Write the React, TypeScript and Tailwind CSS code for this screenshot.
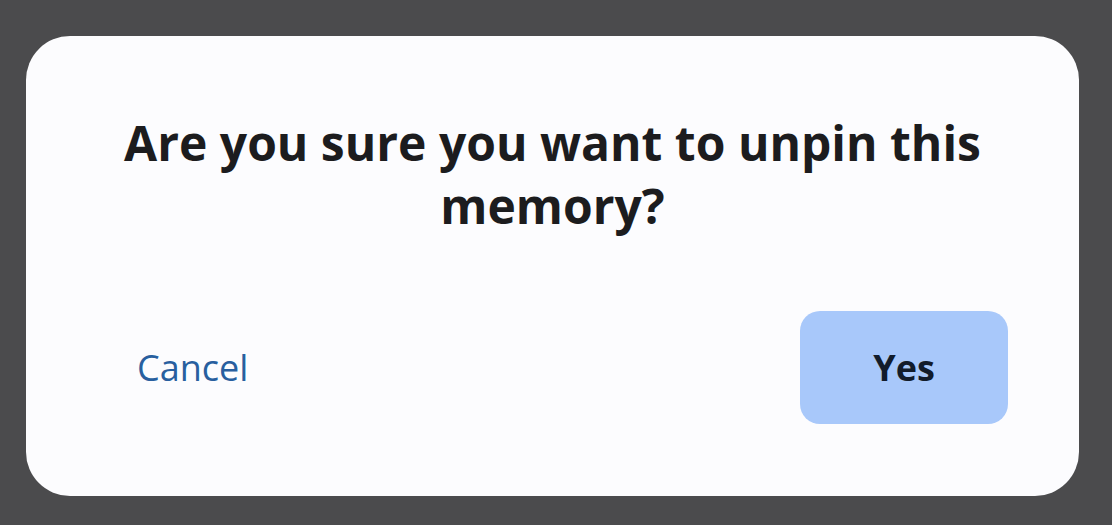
export default function App() {
  return (
    <div className="w-[1112px] h-[525px] bg-[#4b4b4d] pt-[36px] pl-[26px]" style={{ fontFamily: '"Open Sans", sans-serif' }}>
      <div className="w-[1053px] h-[460px] bg-[#fcfcfe] rounded-[44px] flex flex-col">
        <h1 className="mt-[75px] text-center text-[48px] leading-[63px] font-bold text-[#1c1c1e] px-[60px]">
          Are you sure you want to unpin this memory?
        </h1>
        <div className="flex items-center justify-between mt-[74px] pl-[111px] pr-[71px]">
          <button className="text-[36px] text-[#285f9f]">Cancel</button>
          <button className="w-[208px] h-[113px] rounded-[20px] bg-[#a8c8fa] text-[36px] font-bold text-[#121c2b]">Yes</button>
        </div>
      </div>
    </div>
  );
}
